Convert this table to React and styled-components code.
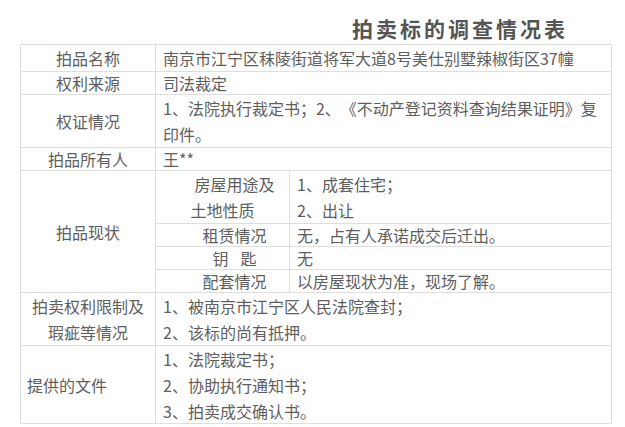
import React from "react";
import styled, { createGlobalStyle } from "styled-components";

const Global = createGlobalStyle`
  html, body { margin: 0; padding: 0; background: #fff; }
  body {
    font-family: "Noto Sans CJK SC", "Microsoft YaHei", sans-serif;
    color: #5e5e5e;
    text-spacing-trim: space-all;
  }
`;

const Page = styled.div`
  width: 625px;
  height: 427px;
  overflow: hidden;
  background: #fff;
`;

const Title = styled.h1`
  margin: 0;
  padding: 12px 0 0 352px;
  height: 32px;
  line-height: 32px;
  font-size: 21px;
  letter-spacing: 3px;
  font-weight: 700;
  color: #555;
  white-space: nowrap;
`;

const Table = styled.div`
  margin-left: 20px;
  width: 592px;
  box-sizing: border-box;
  display: grid;
  grid-template-columns: 135px 134px 1fr;
  border-top: 1px solid #dedede;
  border-left: 1px solid #dedede;
  font-size: 16px;
`;

const Cell = styled.div`
  box-sizing: border-box;
  border-right: 1px solid #dedede;
  border-bottom: 1px solid #dedede;
  display: flex;
  flex-direction: column;
  justify-content: center;
  height: ${(p) => p.$h}px;
  grid-column: ${(p) => p.$col || "auto"};
  grid-row: ${(p) => p.$row || "auto"};
  text-align: ${(p) => p.$align || "left"};
  padding: 0 0 0 ${(p) => (p.$pl != null ? p.$pl : 7)}px;
  line-height: ${(p) => p.$lh || 22}px;
  white-space: nowrap;
`;

const Label = styled(Cell).attrs({ $align: "center", $pl: 0 })``;

const Line = styled.div`
  padding-right: ${(p) => p.$pr || 0}px;
`;

const Gap = styled.span`
  display: inline-block;
  width: 12px;
`;

export default function App() {
  return (
    <Page>
      <Global />
      <Title>拍卖标的调查情况表</Title>
      <Table>
        <Label $h={27} $lh={26}>拍品名称</Label>
        <Cell $h={27} $lh={26} $col="2 / 4">南京市江宁区秣陵街道将军大道8号美仕别墅辣椒街区37幢</Cell>

        <Label $h={23}>权利来源</Label>
        <Cell $h={23} $col="2 / 4">司法裁定</Cell>

        <Label $h={53}>权证情况</Label>
        <Cell $h={53} $lh={26} $col="2 / 4">
          <Line>1、法院执行裁定书；2、《不动产登记资料查询结果证明》复</Line>
          <Line>印件。</Line>
        </Cell>

        <Label $h={23}>拍品所有人</Label>
        <Cell $h={23} $col="2 / 4">王**</Cell>

        <Label $h={122} $row="span 4">拍品现状</Label>
        <Cell $h={53} $lh={26} $align="center" $pl={24}>
          <Line>房屋用途及</Line>
          <Line $pr={24}>土地性质</Line>
        </Cell>
        <Cell $h={53} $lh={26}>
          <Line>1、成套住宅；</Line>
          <Line>2、出让</Line>
        </Cell>
        <Cell $h={23} $align="center" $pl={24}>租赁情况</Cell>
        <Cell $h={23}>无，占有人承诺成交后迁出。</Cell>
        <Cell $h={23} $align="center" $pl={24}>
          <Line>钥<Gap />匙</Line>
        </Cell>
        <Cell $h={23}>无</Cell>
        <Cell $h={23} $align="center" $pl={24}>配套情况</Cell>
        <Cell $h={23}>以房屋现状为准，现场了解。</Cell>

        <Label $h={53} $lh={26}>
          <Line>拍卖权利限制及</Line>
          <Line>瑕疵等情况</Line>
        </Label>
        <Cell $h={53} $lh={26} $col="2 / 4">
          <Line>1、被南京市江宁区人民法院查封；</Line>
          <Line>2、该标的尚有抵押。</Line>
        </Cell>

        <Cell $h={78} $lh={26} $pl={6}>提供的文件</Cell>
        <Cell $h={78} $lh={26} $col="2 / 4">
          <Line>1、法院裁定书；</Line>
          <Line>2、协助执行通知书；</Line>
          <Line>3、拍卖成交确认书。</Line>
        </Cell>
      </Table>
    </Page>
  );
}
